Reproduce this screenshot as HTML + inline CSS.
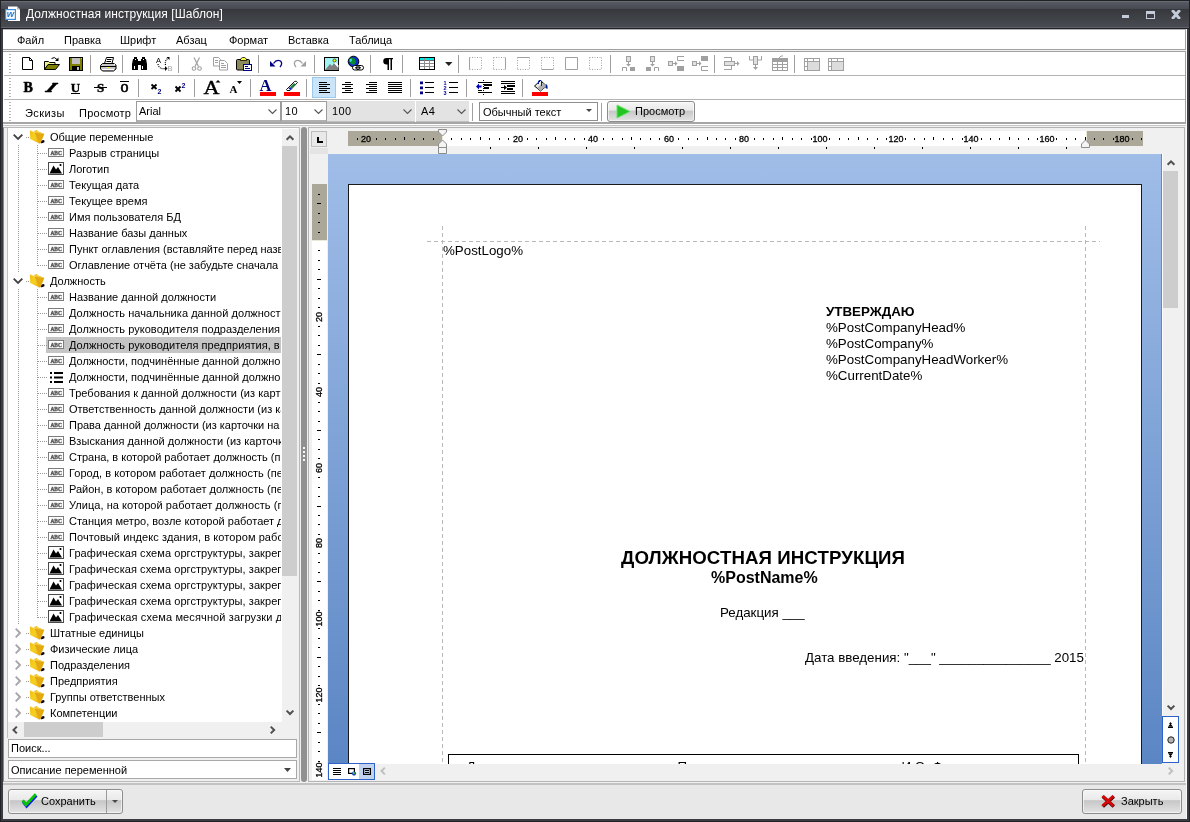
<!DOCTYPE html><html lang="ru"><head><meta charset="utf-8"><title>Должностная инструкция [Шаблон]</title><style>
*{box-sizing:border-box;margin:0;padding:0}
html,body{width:1190px;height:822px;overflow:hidden}
body{position:relative;background:#2b2c2f;font:11px "Liberation Sans",sans-serif;color:#000}
.a{position:absolute}
.t{position:absolute;white-space:pre;line-height:1}
.sep{position:absolute;width:1px;background:#a0a0a0}
.ic{position:absolute;width:16px;height:16px;overflow:visible}
svg{position:absolute;overflow:visible}
.doc{font-family:"Liberation Sans",sans-serif;color:#000}
</style></head><body><div id="w" style="position:absolute;left:0;top:0;width:1190px;height:822px;will-change:transform;overflow:hidden">
<div class="a" style="left:0;top:0;width:1190px;height:29px;background:linear-gradient(#1f2125 0,#1f2125 1px,#676b74 1px,#676b74 2px,#565a63 2px,#464951 9px,#35373b 9px,#37393d 10px,#484b52 27px,#5d616b 27px,#5d616b 28px,#1e2024 28px,#1e2024 29px)"></div>
<div class="a" style="left:0;top:0;width:1px;height:29px;background:#202226"></div><div class="a" style="left:1189px;top:0;width:1px;height:29px;background:#202226"></div>
<div class="a" style="left:0;top:29px;width:1190px;height:793px;background:#3a3c41;border:1px solid #202226;border-top:none"></div>
<div class="a" style="left:3px;top:29px;width:1184px;height:790px;background:#f0f0f0"></div>
<svg class="a" style="left:0;top:0" width="30" height="28" viewBox="0 0 30 28"><path d="M8 6.500h9l3 3v11.500h-12z" fill="#fff"/><path d="M17 6.500v3h3z" fill="#b9b9b9"/><rect x="5.600" y="9.600" width="9.800" height="9.800" fill="#fff" stroke="#3d8fdd" stroke-width="1.200"/><text x="10.500" y="17.300" font-family="Liberation Sans,sans-serif" font-size="9.500" font-weight="700" font-style="italic" fill="#2a7bd0" text-anchor="middle">w</text></svg>
<div class="t" style="left:26px;top:8px;font-size:12px;color:#fff;letter-spacing:0.07px">Должностная инструкция [Шаблон]</div>
<div class="a" style="left:1122px;top:15px;width:7px;height:3px;background:#c3ccd8"></div>
<div class="a" style="left:1146px;top:11px;width:9px;height:8px;border:1px solid #c3ccd8;border-top-width:3px"></div>
<svg class="a" style="left:1171px;top:10px;overflow:hidden" width="10" height="9" viewBox="0 0 10 9"><path d="M1.200 0L8.800 9M8.800 0L1.200 9" stroke="#c3ccd8" stroke-width="2.900" fill="none"/></svg>
<div class="a" style="left:3px;top:29px;width:1183px;height:21px;background:#fff;border-right:1px solid #a0a0a0;border-bottom:1px solid #a0a0a0;border-top:1px solid #b4b4b4"></div>
<div class="t" style="left:17px;top:35px">Файл</div>
<div class="t" style="left:64px;top:35px">Правка</div>
<div class="t" style="left:120px;top:35px">Шрифт</div>
<div class="t" style="left:176px;top:35px">Абзац</div>
<div class="t" style="left:229px;top:35px">Формат</div>
<div class="t" style="left:288px;top:35px">Вставка</div>
<div class="t" style="left:349px;top:35px">Таблица</div>
<div class="a" style="left:3px;top:51px;width:1183px;height:73px;background:#fff;border:1px solid #a0a0a0;border-left:none;border-bottom:2px solid #a6a6a6"></div>
<div class="a" style="left:4px;top:75px;width:1181px;height:1px;background:#b4b4b4"></div>
<div class="a" style="left:4px;top:99px;width:1181px;height:1px;background:#b4b4b4"></div>
<div class="a" style="left:4px;top:124px;width:1182px;height:1px;background:#fff"></div>
<div class="a" style="left:3px;top:125px;width:1184px;height:1px;background:#c6c6c6"></div>
<div class="a" style="left:9px;top:54px;width:2px;height:20px;background:repeating-linear-gradient(#b8b8b8 0,#b8b8b8 1px,#fff 1px,#fff 3px)"></div>
<div class="a" style="left:9px;top:78px;width:2px;height:20px;background:repeating-linear-gradient(#b8b8b8 0,#b8b8b8 1px,#fff 1px,#fff 3px)"></div>
<div class="a" style="left:9px;top:102px;width:2px;height:20px;background:repeating-linear-gradient(#b8b8b8 0,#b8b8b8 1px,#fff 1px,#fff 3px)"></div>
<div class="sep" style="left:90px;top:55px;height:18px"></div>
<div class="sep" style="left:122px;top:55px;height:18px"></div>
<div class="sep" style="left:178px;top:55px;height:18px"></div>
<div class="sep" style="left:258px;top:55px;height:18px"></div>
<div class="sep" style="left:314px;top:55px;height:18px"></div>
<div class="sep" style="left:370px;top:55px;height:18px"></div>
<div class="sep" style="left:402px;top:55px;height:18px"></div>
<div class="sep" style="left:458px;top:55px;height:18px"></div>
<div class="sep" style="left:610px;top:55px;height:18px"></div>
<div class="sep" style="left:714px;top:55px;height:18px"></div>
<div class="sep" style="left:794px;top:55px;height:18px"></div>
<div class="sep" style="left:138px;top:79px;height:18px"></div>
<div class="sep" style="left:194px;top:79px;height:18px"></div>
<div class="sep" style="left:250px;top:79px;height:18px"></div>
<div class="sep" style="left:306px;top:79px;height:18px"></div>
<div class="sep" style="left:410px;top:79px;height:18px"></div>
<div class="sep" style="left:466px;top:79px;height:18px"></div>
<div class="sep" style="left:522px;top:79px;height:18px"></div>
<svg style="left:0;top:0" width="1190" height="130" viewBox="0 0 1190 130"><path d="M22.5 57.5h7l3 3v9h-10z" fill="#fff" stroke="#000"/><path d="M29.5 57.5v3h3" fill="none" stroke="#000"/><path d="M44.5 69.5v-8h4l1 1h5.5v2.5h-7z" fill="#f2f28c" stroke="#000"/><path d="M44.5 69.5l3.5-5h11.5l-4 5z" fill="#808000" stroke="#000" stroke-linejoin="round"/><path d="M51.5 58.5q3-2.3 5.5 1" fill="none" stroke="#000"/><path d="M58.5 57.5v3.5h-3.5z" fill="#000"/><rect x="69.5" y="57.5" width="13" height="13" fill="#808000" stroke="#000"/><rect x="72" y="58" width="8" height="6" fill="#c0c0c0"/><rect x="72" y="66" width="8" height="5" fill="#000"/><rect x="77" y="67" width="2" height="3" fill="#c0c0c0"/><rect x="81" y="58" width="1" height="1" fill="#c0c0c0"/><path d="M104.5 63.5l2-6h7l-1.5 6z" fill="#fff" stroke="#000"/><path d="M107 59.5h4.5M106.5 61.500h4.500" stroke="#000" fill="none"/><path d="M102.500 63.500h11.500l2 1.500v4l-2.500 2h-11l-2-2v-3.500z" fill="#c8c8c8" stroke="#000"/><path d="M100.500 66.500h15.500" stroke="#000"/><rect x="107" y="67" width="3" height="1" fill="#ffff00"/><path d="M102 69.500h12" stroke="#fff"/><circle cx="114.500" cy="64.500" r="0.700" fill="#fff"/><path d="M134 57h3v2h1v2h3v-2h1v-2h3v2h1l1 5v6h-6v-5h-3v5h-6v-6l1-5h1z" fill="#000"/><path d="M134 66h1v3h-1zM142 66h1v3h-1zM135 59h1v1h-1zM143 59h1v1h-1z" fill="#fff"/><text x="156" y="62.500" font-family="Liberation Sans,sans-serif" font-size="7.500" fill="#000">A</text><path d="M158 64q1 5.500 7 4.500" fill="none" stroke="#000" stroke-width="1.200" stroke-dasharray="1 1"/><path d="M165 66v5l2.500-2.500z" fill="#000"/><path d="M165.500 65q-1-5 3-7" fill="none" stroke="#000" stroke-width="1.200" stroke-dasharray="1 1"/><path d="M166.500 57h3v3z" fill="#000"/><text x="167.500" y="70.500" font-family="Liberation Sans,sans-serif" font-size="7.500" fill="#a0a0a0">B</text><path d="M194 57.500l4.500 9M199.500 57.500l-4.500 9" stroke="#a0a0a0" stroke-width="1.200" fill="none"/><circle cx="194" cy="68.500" r="1.800" fill="none" stroke="#a0a0a0" stroke-width="1.100"/><circle cx="199.500" cy="68.500" r="1.800" fill="none" stroke="#a0a0a0" stroke-width="1.100"/><path d="M213.500 57.500h5l2 2v6.500h-7z" fill="#fff" stroke="#a0a0a0"/><path d="M219.500 60.500h5l3 3v6.500h-8z" fill="#fff" stroke="#a0a0a0"/><path d="M215 60.500h3M215 62.500h3M221 63.500h3M221 65.500h5M221 67.500h5" stroke="#a0a0a0"/><rect x="236.500" y="59.500" width="13" height="10.500" rx="1" fill="#8c8a5a" stroke="#000"/><path d="M240.500 60.500v-1.500l2-1.500h2l2 1.500v1.500z" fill="#ffff40" stroke="#000" stroke-width=".8"/><rect x="243.500" y="64.500" width="8" height="6" fill="#fff" stroke="#000080"/><path d="M245 66.500h3M245 68.500h5" stroke="#000080"/><path d="M270 61v5.500h5.500z" fill="#000080"/><path d="M273.500 63.500q3-4.500 7-2.500q2.500 2.500-.5 6" fill="none" stroke="#000080" stroke-width="1.300"/><path d="M306 61v5.500h-5.500z" fill="#a0a0a0"/><path d="M302.500 63.500q-3-4.500-7-2.500q-2.500 2.500 .5 6" fill="none" stroke="#a0a0a0" stroke-width="1.300"/><rect x="324.500" y="57.500" width="14" height="13" fill="#9ff3f3" stroke="#000"/><path d="M325 70l5-6 2 2 2-3 4.500 5v2z" fill="#808080"/><path d="M334 63l4.500 5v-2.500l-3-3.500z" fill="#fff"/><circle cx="334.500" cy="60.500" r="1.500" fill="#ffff00" stroke="#000" stroke-width=".6"/><circle cx="353.500" cy="61.500" r="5.300" fill="#0a2bd8" stroke="#000"/><path d="M350 58q3-1 5 1l1 3-2 3-3-1-2-3z" fill="#0a8a2a"/><path d="M349.500 59.500l2-1 .5 2.500-2 1z" fill="#40e0f0"/><rect x="352.500" y="65.500" width="7" height="4.500" rx="2.200" fill="#fff" stroke="#000"/><rect x="356.500" y="65.500" width="7" height="4.500" rx="2.200" fill="none" stroke="#000"/><path d="M355 67.800h6" stroke="#000"/><path d="M386.500 58h6.500v1.200h-1v10.800h-1.500v-10.800h-1.500v10.800h-1.500v-5.500h-1a3.250 3.250 0 0 1 0-6.500z" fill="#000"/><rect x="419.500" y="57.500" width="15" height="12" fill="#fff" stroke="#000"/><rect x="420" y="58" width="14" height="2" fill="#00e5e5"/><path d="M420 60.500h14" stroke="#000" stroke-width=".6"/><path d="M424.500 58v11M429.500 58v11M420 63.500h14M420 66.500h14" stroke="#8c8c8c"/><path d="M445 62h7.500l-3.750 4z" fill="#222"/><path d="M469.5 57.5v12" stroke="#a0a0a0" fill="none"/><path d="M481.5 57.5v12" stroke="#a0a0a0" fill="none" stroke-dasharray="1 1.500"/><path d="M469.5 57.5h12" stroke="#a0a0a0" fill="none" stroke-dasharray="1 1.500"/><path d="M469.5 69.5h12" stroke="#a0a0a0" fill="none" stroke-dasharray="1 1.500"/><path d="M493.5 57.5v12" stroke="#a0a0a0" fill="none" stroke-dasharray="1 1.500"/><path d="M505.5 57.5v12" stroke="#a0a0a0" fill="none"/><path d="M493.5 57.5h12" stroke="#a0a0a0" fill="none" stroke-dasharray="1 1.500"/><path d="M493.5 69.5h12" stroke="#a0a0a0" fill="none" stroke-dasharray="1 1.500"/><path d="M517.5 57.5v12" stroke="#a0a0a0" fill="none" stroke-dasharray="1 1.500"/><path d="M529.5 57.5v12" stroke="#a0a0a0" fill="none" stroke-dasharray="1 1.500"/><path d="M517.5 57.5h12" stroke="#a0a0a0" fill="none"/><path d="M517.5 69.5h12" stroke="#a0a0a0" fill="none" stroke-dasharray="1 1.500"/><path d="M541.5 57.5v12" stroke="#a0a0a0" fill="none" stroke-dasharray="1 1.500"/><path d="M553.5 57.5v12" stroke="#a0a0a0" fill="none" stroke-dasharray="1 1.500"/><path d="M541.5 57.5h12" stroke="#a0a0a0" fill="none" stroke-dasharray="1 1.500"/><path d="M541.5 69.5h12" stroke="#a0a0a0" fill="none"/><path d="M565.5 57.5v12" stroke="#a0a0a0" fill="none"/><path d="M577.5 57.5v12" stroke="#a0a0a0" fill="none"/><path d="M565.5 57.5h12" stroke="#a0a0a0" fill="none"/><path d="M565.5 69.5h12" stroke="#a0a0a0" fill="none"/><path d="M589.5 57.5v12" stroke="#a0a0a0" fill="none" stroke-dasharray="1 1.500"/><path d="M601.5 57.5v12" stroke="#a0a0a0" fill="none" stroke-dasharray="1 1.500"/><path d="M589.5 57.5h12" stroke="#a0a0a0" fill="none" stroke-dasharray="1 1.500"/><path d="M589.5 69.5h12" stroke="#a0a0a0" fill="none" stroke-dasharray="1 1.500"/><rect x="626.5" y="56.500" width="4" height="5" fill="#e0e0e0" stroke="#a0a0a0"/><path d="M628.5 61v4" stroke="#a0a0a0"/><path d="M626 64h5l-2.500 2.500z" fill="#a0a0a0"/><path d="M622.5 71v-3.500h4v3.500" fill="none" stroke="#a0a0a0"/><rect x="630" y="67" width="5" height="4" fill="#a0a0a0"/><rect x="650.5" y="56.500" width="4" height="5" fill="#e0e0e0" stroke="#a0a0a0"/><path d="M652.5 61v4" stroke="#a0a0a0"/><path d="M650 64h5l-2.500 2.500z" fill="#a0a0a0"/><rect x="646" y="67" width="5" height="4" fill="#a0a0a0"/><path d="M654.5 71v-3.500h4v3.500" fill="none" stroke="#a0a0a0"/><rect x="668.5" y="61.500" width="4" height="4" fill="#e0e0e0" stroke="#a0a0a0"/><path d="M672 63.500h4" stroke="#a0a0a0"/><path d="M675 61v5l2.500-2.500z" fill="#a0a0a0"/><path d="M684 56.500h-6.500v4h6.500" fill="none" stroke="#a0a0a0"/><rect x="677" y="66" width="7" height="5" fill="#a0a0a0"/><rect x="692.5" y="61.500" width="4" height="4" fill="#e0e0e0" stroke="#a0a0a0"/><path d="M696 63.500h4" stroke="#a0a0a0"/><path d="M699 61v5l2.500-2.500z" fill="#a0a0a0"/><rect x="701" y="56" width="7" height="5" fill="#a0a0a0"/><path d="M708 66.500h-6.500v4h6.500" fill="none" stroke="#a0a0a0"/><path d="M724 57.500h7.500v12h-7.500" fill="none" stroke="#a0a0a0"/><rect x="724.500" y="61.500" width="10" height="4" fill="#e0e0e0" stroke="#a0a0a0"/><path d="M734 63.500h4" stroke="#a0a0a0"/><path d="M737 61v5l2.500-2.500z" fill="#a0a0a0"/><path d="M749.500 56v4h12v-4" fill="none" stroke="#a0a0a0"/><rect x="753.500" y="56.500" width="4" height="8" fill="#e0e0e0" stroke="#a0a0a0"/><path d="M755.500 64v4" stroke="#a0a0a0"/><path d="M753 67h5l-2.500 3z" fill="#a0a0a0"/><rect x="772" y="58" width="16" height="13" fill="#a0a0a0"/><path d="M773 62h4v2h-4zM778 62h4v2h-4zM783 62h4v2h-4zM773 65h4v2h-4zM778 65h4v2h-4zM783 65h4v2h-4zM773 68h4v2h-4zM778 68h4v2h-4zM783 68h4v2h-4z" fill="#fff"/><path d="M779 58l2-2h2" stroke="#a0a0a0" fill="none"/><rect x="804" y="58" width="16" height="13" fill="#a0a0a0"/><path d="M805 59h2v2h-2zM808 59h5v2h-5zM814 59h5v2h-5zM805 62h2v4h-2zM805 67h2v3h-2z" fill="#fff"/><rect x="808" y="62" width="11" height="8" fill="#dcdcdc"/><rect x="828" y="58" width="16" height="13" fill="#a0a0a0"/><path d="M829 59h2v2h-2zM832 59h5v2h-5zM838 59h5v2h-5zM829 62h2v4h-2zM829 67h2v3h-2z" fill="#fff"/><rect x="832" y="62" width="11" height="8" fill="#dcdcdc"/></svg>
<svg style="left:0;top:0" width="1190" height="130" viewBox="0 0 1190 130"><text x="23.500" y="92" font-family="Liberation Serif,serif" font-weight="700" font-size="14" fill="#000" stroke="#000" stroke-width=".5">B</text><path d="M52.500 83h5.500v1h-1.200l-6.300 7h1v1h-6.500v-1h1.700l6.300-7h-.5z" fill="#000" stroke="#000" stroke-width=".5"/><text x="75.500" y="92" font-family="Liberation Serif,serif" font-weight="700" font-size="13" text-anchor="middle" fill="#000" stroke="#000" stroke-width=".4">U</text><path d="M71 93.500h9" stroke="#000"/><text x="100.500" y="92" font-family="Liberation Serif,serif" font-weight="700" font-size="13" text-anchor="middle" fill="#000" stroke="#000" stroke-width=".4">S</text><path d="M94 87.500h13" stroke="#000"/><text x="124.500" y="92" font-family="Liberation Serif,serif" font-weight="700" font-size="12.500" text-anchor="middle" fill="#000" stroke="#000" stroke-width=".5" textLength="8" lengthAdjust="spacingAndGlyphs">O</text><path d="M120 81.500h9" stroke="#000"/><path d="M151.500 84.500l5 4.500M156.500 84.500l-5 4.500" stroke="#000" stroke-width="1.900" fill="none"/><text x="157.500" y="93.500" font-family="Liberation Sans,sans-serif" font-weight="700" font-size="7" fill="#000080">2</text><path d="M175.500 86.500l5 5M180.500 86.500l-5 5" stroke="#000" stroke-width="1.900" fill="none"/><text x="181.500" y="87.500" font-family="Liberation Sans,sans-serif" font-weight="700" font-size="7" fill="#000080">2</text><text x="203.500" y="94" font-family="Liberation Serif,serif" font-size="18.500" fill="#000" stroke="#000" stroke-width=".4" textLength="16" lengthAdjust="spacingAndGlyphs">A</text><path d="M215.500 82.500h5l-2.500-2.500z" fill="#000"/><text x="229.500" y="93" font-family="Liberation Serif,serif" font-weight="700" font-size="11" fill="#000">A</text><path d="M237 81h5l-2.500 3z" fill="#000"/><text x="259.500" y="91" font-family="Liberation Serif,serif" font-weight="700" font-size="16.500" fill="#000080">A</text><rect x="260" y="92" width="16" height="4" fill="#ff0000"/><path d="M286.500 89.500l8-8q2-1 3 1l-7.500 8h-3z" fill="#fff" stroke="#000" stroke-width=".9"/><path d="M290 87l4-4 1.500 1.500-4 4z" fill="#1a8a3a"/><path d="M288.500 88.500l1.500-1.500 1.500 1.500-1 1.500z" fill="#0020c0"/><rect x="284" y="92" width="16" height="4" fill="#ff0000"/><rect x="312.500" y="77.500" width="23" height="20" fill="#cce4f7" stroke="#99c9ef"/><path d="M319 82.5H327M319 84.5H330M319 86.5H327M319 88.5H330M319 90.5H327M319 92.5H330" stroke="#000" fill="none"/><path d="M345 82.5H351M342 84.5H353M345 86.5H351M342 88.5H353M345 90.5H351M342 92.5H353" stroke="#000" fill="none"/><path d="M369 82.5H377M366 84.5H377M369 86.5H377M366 88.5H377M369 90.5H377M366 92.5H377" stroke="#000" fill="none"/><path d="M388 82.5H402M388 84.5H402M388 86.5H402M388 88.5H402M388 90.5H402M388 92.5H402" stroke="#000" fill="none"/><path d="M420 81.500h3v2.800h-3zM420 86.500h3v2.800h-3zM420 91.500h3v2.800h-3z" fill="#000080"/><path d="M425 82.5H434M425 87.5H434M425 92.5H434" stroke="#000" fill="none"/><text x="443.500" y="85" font-family="Liberation Sans,sans-serif" font-weight="700" font-size="5.500" fill="#000090">1</text><text x="443.500" y="90" font-family="Liberation Sans,sans-serif" font-weight="700" font-size="5.500" fill="#000090">2</text><text x="443.500" y="95" font-family="Liberation Sans,sans-serif" font-weight="700" font-size="5.500" fill="#000090">3</text><path d="M449 82.5H458M449 87.5H458M449 92.5H458" stroke="#000" fill="none"/><path d="M478 82.5H492M478 92.5H492" stroke="#000" fill="none"/><path d="M484 84h8v2h-8zM484 87h5v2h-5z" fill="#000"/><path d="M483.500 80v15" stroke="#000" stroke-dasharray="1 1"/><path d="M476 86.500l3-3v2h2.500v2h-2.500v2z" fill="#0000c0"/><path d="M478 90.5H482M478 82.5H482" stroke="#000" fill="none"/><path d="M501 81.5H515M501 83.5H515M501 91.5H515M501 93.5H515" stroke="#000" fill="none"/><path d="M507 85h8v2h-8zM507 88h6v2h-6z" fill="#000"/><path d="M501 87h3v-2l3 2.500-3 2.500v-2h-3z" fill="#000"/><path d="M534.500 86l6-5.500 6 5.500-6 5z" fill="#e8e8e8" stroke="#000"/><path d="M537 88l6-5 3.500 3-6 5z" fill="#b0b0b0"/><path d="M538.500 84v-3q1.500-1.500 3 0v5" fill="none" stroke="#0020a0"/><path d="M546 84q2 1 1.500 5l-2-1z" fill="#0020a0"/><rect x="532" y="92" width="16" height="4" fill="#ff0000"/></svg>
<div class="t" style="left:25px;top:108px;letter-spacing:.4px">Эскизы</div>
<div class="t" style="left:79px;top:108px;letter-spacing:.25px">Просмотр</div>
<div class="a" style="left:136px;top:101px;width:145px;height:21px;background:#fff;border:1px solid #9c9c9c;border-bottom:2px solid #b0b0b0"></div>
<div class="t" style="left:139px;top:106px">Arial</div>
<svg class="a" style="left:268px;top:109px" width="9" height="6" viewBox="0 0 9 6"><path d="M0.5 0.5L4.5 4.5L8.5 0.5" stroke="#555" stroke-width="1.1" fill="none"/></svg>
<div class="a" style="left:281px;top:101px;width:46px;height:21px;background:#fff;border:1px solid #9c9c9c;border-bottom:2px solid #b0b0b0"></div>
<div class="t" style="left:285px;top:106px;letter-spacing:.4px">10</div>
<svg class="a" style="left:314px;top:109px" width="9" height="6" viewBox="0 0 9 6"><path d="M0.5 0.5L4.5 4.5L8.5 0.5" stroke="#555" stroke-width="1.1" fill="none"/></svg>
<div class="a" style="left:327px;top:101px;width:88px;height:21px;background:#e3e3e3;border-bottom:1px solid #c0c0c0"></div>
<div class="t" style="left:332px;top:106px;letter-spacing:.4px">100</div>
<svg class="a" style="left:403px;top:109px" width="9" height="6" viewBox="0 0 9 6"><path d="M0.5 0.5L4.5 4.5L8.5 0.5" stroke="#555" stroke-width="1.1" fill="none"/></svg>
<div class="a" style="left:416px;top:101px;width:53px;height:21px;background:#e3e3e3;border-bottom:1px solid #c0c0c0"></div>
<div class="t" style="left:421px;top:106px;letter-spacing:.4px">A4</div>
<svg class="a" style="left:457px;top:109px" width="9" height="6" viewBox="0 0 9 6"><path d="M0.5 0.5L4.5 4.5L8.5 0.5" stroke="#555" stroke-width="1.1" fill="none"/></svg>
<div class="sep" style="left:472px;top:103px;height:18px"></div>
<div class="a" style="left:479px;top:102px;width:119px;height:19px;background:#fff;border:1px solid #8e8e8e"></div>
<div class="t" style="left:483px;top:107px">Обычный текст</div>
<svg class="a" style="left:586px;top:109px" width="6" height="3" viewBox="0 0 6 3"><path d="M0 0h6L3 3z" fill="#444"/></svg>
<div class="sep" style="left:601px;top:103px;height:18px"></div>
<div class="a" style="left:607px;top:101px;width:88px;height:21px;border:1px solid #8c8c8c;border-radius:3px;background:linear-gradient(#f5f5f5,#e9e9e9 44%,#c6c6c6 46%,#e3e3e3);box-shadow:inset 0 0 0 1px rgba(255,255,255,.6)"></div>
<svg class="a" style="left:616px;top:104px" width="15" height="15" viewBox="0 0 15 15"><path d="M1 1L14 7.5L1 14z" fill="#22c322" stroke="#6be06b" stroke-width="1"/></svg>
<div class="t" style="left:635px;top:106px">Просмотр</div>
<div class="a" style="left:3px;top:127px;width:297px;height:655px;background:#f0f0f0;border:1px solid #b9b9b9;border-left:1px solid #85878b"></div>
<div class="a" style="left:7px;top:128px;width:291px;height:610px;background:#fff;border-left:1px solid #c0c0c0"></div>
<div class="a" style="left:8px;top:129px;width:273px;height:593px;overflow:hidden">
<div class="a" style="left:10px;top:16px;width:1px;height:128px;background:repeating-linear-gradient(#9a9a9a 0,#9a9a9a 1px,transparent 1px,transparent 2px)"></div>
<div class="a" style="left:10px;top:160px;width:1px;height:335px;background:repeating-linear-gradient(#9a9a9a 0,#9a9a9a 1px,transparent 1px,transparent 2px)"></div>
<div class="a" style="left:29px;top:16px;width:1px;height:121px;background:repeating-linear-gradient(#9a9a9a 0,#9a9a9a 1px,transparent 1px,transparent 2px)"></div>
<div class="a" style="left:29px;top:160px;width:1px;height:329px;background:repeating-linear-gradient(#9a9a9a 0,#9a9a9a 1px,transparent 1px,transparent 2px)"></div>
<svg style="left:5px;top:5px" width="10" height="6" viewBox="0 0 10 6"><path d="M0.7 0.7L5 5l4.3-4.3" stroke="#404040" stroke-width="1.8" fill="none"/></svg>
<div class="a" style="left:18px;top:8px;width:3px;height:1px;background:repeating-linear-gradient(90deg,#9a9a9a 0,#9a9a9a 1px,transparent 1px,transparent 2px)"></div>
<svg style="left:20px;top:0px" width="19" height="16" viewBox="0 0 19 16"><defs><linearGradient id="fg0" x1="0" y1="0" x2="1" y2="1"><stop offset="0" stop-color="#f1bd1c"/><stop offset=".5" stop-color="#f8d020"/><stop offset="1" stop-color="#e9b010"/></linearGradient></defs><ellipse cx="14.300" cy="12.700" rx="2.400" ry="1.400" transform="rotate(-20 14.300 12.700)" fill="#0a0a0a"/><path d="M6.200 2l2.500-.8 1.800 1.600 5.800 2.300-3.500 9-1.500.3z" fill="#e3aa10"/><path d="M6.200 2l2.500-.8 1.800 1.600 5.800 2.300-9.100-1.300z" fill="#f3c93a"/><path d="M1.900 1.300l5.300 2.500 4.100 10.600-9.100-4.500z" fill="url(#fg0)"/><path d="M7.200 3.800l4.100 10.600" stroke="#d9a010" stroke-width=".7" fill="none"/></svg>
<div class="t" style="left:42px;top:3px">Общие переменные</div>
<div class="a" style="left:30px;top:24px;width:10px;height:1px;background:repeating-linear-gradient(90deg,#9a9a9a 0,#9a9a9a 1px,transparent 1px,transparent 2px)"></div>
<svg style="left:40px;top:19px" width="16" height="9" viewBox="0 0 16 9"><rect x="0.5" y="0.5" width="15" height="8" fill="#fff" stroke="#7c7c7c"/><text x="8.200" y="6.800" font-family="Liberation Serif,serif" font-weight="700" font-size="6.900" fill="#585858" stroke="#585858" stroke-width=".42" text-anchor="middle" textLength="11.500" lengthAdjust="spacingAndGlyphs">ABC</text></svg>
<div class="t" style="left:61px;top:19px;letter-spacing:0px">Разрыв страницы</div>
<div class="a" style="left:30px;top:40px;width:10px;height:1px;background:repeating-linear-gradient(90deg,#9a9a9a 0,#9a9a9a 1px,transparent 1px,transparent 2px)"></div>
<svg style="left:40px;top:33px" width="16" height="13" viewBox="0 0 16 13"><rect x="0.5" y="0.5" width="15" height="12" fill="#fff" stroke="#4a4a4a"/><path d="M1.500 11.500L5.500 3.500 8 7.500l2-2.500 4 6.500z" fill="#000"/><rect x="11.500" y="2" width="2" height="2" rx=".7" fill="#000"/></svg>
<div class="t" style="left:61px;top:35px;letter-spacing:0px">Логотип</div>
<div class="a" style="left:30px;top:56px;width:10px;height:1px;background:repeating-linear-gradient(90deg,#9a9a9a 0,#9a9a9a 1px,transparent 1px,transparent 2px)"></div>
<svg style="left:40px;top:51px" width="16" height="9" viewBox="0 0 16 9"><rect x="0.5" y="0.5" width="15" height="8" fill="#fff" stroke="#7c7c7c"/><text x="8.200" y="6.800" font-family="Liberation Serif,serif" font-weight="700" font-size="6.900" fill="#585858" stroke="#585858" stroke-width=".42" text-anchor="middle" textLength="11.500" lengthAdjust="spacingAndGlyphs">ABC</text></svg>
<div class="t" style="left:61px;top:51px;letter-spacing:0px">Текущая дата</div>
<div class="a" style="left:30px;top:72px;width:10px;height:1px;background:repeating-linear-gradient(90deg,#9a9a9a 0,#9a9a9a 1px,transparent 1px,transparent 2px)"></div>
<svg style="left:40px;top:67px" width="16" height="9" viewBox="0 0 16 9"><rect x="0.5" y="0.5" width="15" height="8" fill="#fff" stroke="#7c7c7c"/><text x="8.200" y="6.800" font-family="Liberation Serif,serif" font-weight="700" font-size="6.900" fill="#585858" stroke="#585858" stroke-width=".42" text-anchor="middle" textLength="11.500" lengthAdjust="spacingAndGlyphs">ABC</text></svg>
<div class="t" style="left:61px;top:67px;letter-spacing:0px">Текущее время</div>
<div class="a" style="left:30px;top:88px;width:10px;height:1px;background:repeating-linear-gradient(90deg,#9a9a9a 0,#9a9a9a 1px,transparent 1px,transparent 2px)"></div>
<svg style="left:40px;top:83px" width="16" height="9" viewBox="0 0 16 9"><rect x="0.5" y="0.5" width="15" height="8" fill="#fff" stroke="#7c7c7c"/><text x="8.200" y="6.800" font-family="Liberation Serif,serif" font-weight="700" font-size="6.900" fill="#585858" stroke="#585858" stroke-width=".42" text-anchor="middle" textLength="11.500" lengthAdjust="spacingAndGlyphs">ABC</text></svg>
<div class="t" style="left:61px;top:83px;letter-spacing:0px">Имя пользователя БД</div>
<div class="a" style="left:30px;top:104px;width:10px;height:1px;background:repeating-linear-gradient(90deg,#9a9a9a 0,#9a9a9a 1px,transparent 1px,transparent 2px)"></div>
<svg style="left:40px;top:99px" width="16" height="9" viewBox="0 0 16 9"><rect x="0.5" y="0.5" width="15" height="8" fill="#fff" stroke="#7c7c7c"/><text x="8.200" y="6.800" font-family="Liberation Serif,serif" font-weight="700" font-size="6.900" fill="#585858" stroke="#585858" stroke-width=".42" text-anchor="middle" textLength="11.500" lengthAdjust="spacingAndGlyphs">ABC</text></svg>
<div class="t" style="left:61px;top:99px;letter-spacing:0px">Название базы данных</div>
<div class="a" style="left:30px;top:120px;width:10px;height:1px;background:repeating-linear-gradient(90deg,#9a9a9a 0,#9a9a9a 1px,transparent 1px,transparent 2px)"></div>
<svg style="left:40px;top:115px" width="16" height="9" viewBox="0 0 16 9"><rect x="0.5" y="0.5" width="15" height="8" fill="#fff" stroke="#7c7c7c"/><text x="8.200" y="6.800" font-family="Liberation Serif,serif" font-weight="700" font-size="6.900" fill="#585858" stroke="#585858" stroke-width=".42" text-anchor="middle" textLength="11.500" lengthAdjust="spacingAndGlyphs">ABC</text></svg>
<div class="t" style="left:61px;top:115px;letter-spacing:-0.013px">Пункт оглавления (вставляйте перед названием раздела)</div>
<div class="a" style="left:30px;top:136px;width:10px;height:1px;background:repeating-linear-gradient(90deg,#9a9a9a 0,#9a9a9a 1px,transparent 1px,transparent 2px)"></div>
<svg style="left:40px;top:131px" width="16" height="9" viewBox="0 0 16 9"><rect x="0.5" y="0.5" width="15" height="8" fill="#fff" stroke="#7c7c7c"/><text x="8.200" y="6.800" font-family="Liberation Serif,serif" font-weight="700" font-size="6.900" fill="#585858" stroke="#585858" stroke-width=".42" text-anchor="middle" textLength="11.500" lengthAdjust="spacingAndGlyphs">ABC</text></svg>
<div class="t" style="left:61px;top:131px;letter-spacing:-0.013px">Оглавление отчёта (не забудьте сначала вставить пункты)</div>
<svg style="left:5px;top:149px" width="10" height="6" viewBox="0 0 10 6"><path d="M0.7 0.7L5 5l4.3-4.3" stroke="#404040" stroke-width="1.8" fill="none"/></svg>
<div class="a" style="left:18px;top:152px;width:3px;height:1px;background:repeating-linear-gradient(90deg,#9a9a9a 0,#9a9a9a 1px,transparent 1px,transparent 2px)"></div>
<svg style="left:20px;top:144px" width="19" height="16" viewBox="0 0 19 16"><defs><linearGradient id="fg9" x1="0" y1="0" x2="1" y2="1"><stop offset="0" stop-color="#f1bd1c"/><stop offset=".5" stop-color="#f8d020"/><stop offset="1" stop-color="#e9b010"/></linearGradient></defs><ellipse cx="14.300" cy="12.700" rx="2.400" ry="1.400" transform="rotate(-20 14.300 12.700)" fill="#0a0a0a"/><path d="M6.200 2l2.500-.8 1.800 1.600 5.800 2.300-3.500 9-1.500.3z" fill="#e3aa10"/><path d="M6.200 2l2.500-.8 1.800 1.600 5.800 2.300-9.100-1.300z" fill="#f3c93a"/><path d="M1.900 1.300l5.300 2.500 4.100 10.600-9.100-4.500z" fill="url(#fg9)"/><path d="M7.200 3.800l4.100 10.600" stroke="#d9a010" stroke-width=".7" fill="none"/></svg>
<div class="t" style="left:42px;top:147px">Должность</div>
<div class="a" style="left:30px;top:168px;width:10px;height:1px;background:repeating-linear-gradient(90deg,#9a9a9a 0,#9a9a9a 1px,transparent 1px,transparent 2px)"></div>
<svg style="left:40px;top:163px" width="16" height="9" viewBox="0 0 16 9"><rect x="0.5" y="0.5" width="15" height="8" fill="#fff" stroke="#7c7c7c"/><text x="8.200" y="6.800" font-family="Liberation Serif,serif" font-weight="700" font-size="6.900" fill="#585858" stroke="#585858" stroke-width=".42" text-anchor="middle" textLength="11.500" lengthAdjust="spacingAndGlyphs">ABC</text></svg>
<div class="t" style="left:61px;top:163px;letter-spacing:0px">Название данной должности</div>
<div class="a" style="left:30px;top:184px;width:10px;height:1px;background:repeating-linear-gradient(90deg,#9a9a9a 0,#9a9a9a 1px,transparent 1px,transparent 2px)"></div>
<svg style="left:40px;top:179px" width="16" height="9" viewBox="0 0 16 9"><rect x="0.5" y="0.5" width="15" height="8" fill="#fff" stroke="#7c7c7c"/><text x="8.200" y="6.800" font-family="Liberation Serif,serif" font-weight="700" font-size="6.900" fill="#585858" stroke="#585858" stroke-width=".42" text-anchor="middle" textLength="11.500" lengthAdjust="spacingAndGlyphs">ABC</text></svg>
<div class="t" style="left:61px;top:179px;letter-spacing:0.048px">Должность начальника данной должности</div>
<div class="a" style="left:30px;top:200px;width:10px;height:1px;background:repeating-linear-gradient(90deg,#9a9a9a 0,#9a9a9a 1px,transparent 1px,transparent 2px)"></div>
<svg style="left:40px;top:195px" width="16" height="9" viewBox="0 0 16 9"><rect x="0.5" y="0.5" width="15" height="8" fill="#fff" stroke="#7c7c7c"/><text x="8.200" y="6.800" font-family="Liberation Serif,serif" font-weight="700" font-size="6.900" fill="#585858" stroke="#585858" stroke-width=".42" text-anchor="middle" textLength="11.500" lengthAdjust="spacingAndGlyphs">ABC</text></svg>
<div class="t" style="left:61px;top:195px;letter-spacing:0.041px">Должность руководителя подразделения, в котором</div>
<div class="a" style="left:38px;top:208px;width:240px;height:16px;background:#c5c5c5"></div>
<div class="a" style="left:30px;top:216px;width:10px;height:1px;background:repeating-linear-gradient(90deg,#9a9a9a 0,#9a9a9a 1px,transparent 1px,transparent 2px)"></div>
<svg style="left:40px;top:211px" width="16" height="9" viewBox="0 0 16 9"><rect x="0.5" y="0.5" width="15" height="8" fill="#fff" stroke="#7c7c7c"/><text x="8.200" y="6.800" font-family="Liberation Serif,serif" font-weight="700" font-size="6.900" fill="#585858" stroke="#585858" stroke-width=".42" text-anchor="middle" textLength="11.500" lengthAdjust="spacingAndGlyphs">ABC</text></svg>
<div class="t" style="left:61px;top:211px;letter-spacing:0.042px">Должность руководителя предприятия, в котором</div>
<div class="a" style="left:30px;top:232px;width:10px;height:1px;background:repeating-linear-gradient(90deg,#9a9a9a 0,#9a9a9a 1px,transparent 1px,transparent 2px)"></div>
<svg style="left:40px;top:227px" width="16" height="9" viewBox="0 0 16 9"><rect x="0.5" y="0.5" width="15" height="8" fill="#fff" stroke="#7c7c7c"/><text x="8.200" y="6.800" font-family="Liberation Serif,serif" font-weight="700" font-size="6.900" fill="#585858" stroke="#585858" stroke-width=".42" text-anchor="middle" textLength="11.500" lengthAdjust="spacingAndGlyphs">ABC</text></svg>
<div class="t" style="left:61px;top:227px;letter-spacing:-0.017px">Должности, подчинённые данной должности (строкой)</div>
<div class="a" style="left:30px;top:248px;width:10px;height:1px;background:repeating-linear-gradient(90deg,#9a9a9a 0,#9a9a9a 1px,transparent 1px,transparent 2px)"></div>
<svg style="left:42px;top:243px" width="13" height="11" viewBox="0 0 13 11"><path d="M0 0h2v2H0zM0 4.5h2v2H0zM0 9h2v2H0zM4 0h9v2H4zM4 4.5h9v2H4zM4 9h9v2H4z" fill="#000"/></svg>
<div class="t" style="left:61px;top:243px;letter-spacing:-0.017px">Должности, подчинённые данной должности (списком)</div>
<div class="a" style="left:30px;top:264px;width:10px;height:1px;background:repeating-linear-gradient(90deg,#9a9a9a 0,#9a9a9a 1px,transparent 1px,transparent 2px)"></div>
<svg style="left:40px;top:259px" width="16" height="9" viewBox="0 0 16 9"><rect x="0.5" y="0.5" width="15" height="8" fill="#fff" stroke="#7c7c7c"/><text x="8.200" y="6.800" font-family="Liberation Serif,serif" font-weight="700" font-size="6.900" fill="#585858" stroke="#585858" stroke-width=".42" text-anchor="middle" textLength="11.500" lengthAdjust="spacingAndGlyphs">ABC</text></svg>
<div class="t" style="left:61px;top:259px;letter-spacing:0.052px">Требования к данной должности (из карточки)</div>
<div class="a" style="left:30px;top:280px;width:10px;height:1px;background:repeating-linear-gradient(90deg,#9a9a9a 0,#9a9a9a 1px,transparent 1px,transparent 2px)"></div>
<svg style="left:40px;top:275px" width="16" height="9" viewBox="0 0 16 9"><rect x="0.5" y="0.5" width="15" height="8" fill="#fff" stroke="#7c7c7c"/><text x="8.200" y="6.800" font-family="Liberation Serif,serif" font-weight="700" font-size="6.900" fill="#585858" stroke="#585858" stroke-width=".42" text-anchor="middle" textLength="11.500" lengthAdjust="spacingAndGlyphs">ABC</text></svg>
<div class="t" style="left:61px;top:275px;letter-spacing:0.012px">Ответственность данной должности (из карточки)</div>
<div class="a" style="left:30px;top:296px;width:10px;height:1px;background:repeating-linear-gradient(90deg,#9a9a9a 0,#9a9a9a 1px,transparent 1px,transparent 2px)"></div>
<svg style="left:40px;top:291px" width="16" height="9" viewBox="0 0 16 9"><rect x="0.5" y="0.5" width="15" height="8" fill="#fff" stroke="#7c7c7c"/><text x="8.200" y="6.800" font-family="Liberation Serif,serif" font-weight="700" font-size="6.900" fill="#585858" stroke="#585858" stroke-width=".42" text-anchor="middle" textLength="11.500" lengthAdjust="spacingAndGlyphs">ABC</text></svg>
<div class="t" style="left:61px;top:291px;letter-spacing:-0.007px">Права данной должности (из карточки на вкладке)</div>
<div class="a" style="left:30px;top:312px;width:10px;height:1px;background:repeating-linear-gradient(90deg,#9a9a9a 0,#9a9a9a 1px,transparent 1px,transparent 2px)"></div>
<svg style="left:40px;top:307px" width="16" height="9" viewBox="0 0 16 9"><rect x="0.5" y="0.5" width="15" height="8" fill="#fff" stroke="#7c7c7c"/><text x="8.200" y="6.800" font-family="Liberation Serif,serif" font-weight="700" font-size="6.900" fill="#585858" stroke="#585858" stroke-width=".42" text-anchor="middle" textLength="11.500" lengthAdjust="spacingAndGlyphs">ABC</text></svg>
<div class="t" style="left:61px;top:307px;letter-spacing:0.038px">Взыскания данной должности (из карточки на вкладке)</div>
<div class="a" style="left:30px;top:328px;width:10px;height:1px;background:repeating-linear-gradient(90deg,#9a9a9a 0,#9a9a9a 1px,transparent 1px,transparent 2px)"></div>
<svg style="left:40px;top:323px" width="16" height="9" viewBox="0 0 16 9"><rect x="0.5" y="0.5" width="15" height="8" fill="#fff" stroke="#7c7c7c"/><text x="8.200" y="6.800" font-family="Liberation Serif,serif" font-weight="700" font-size="6.900" fill="#585858" stroke="#585858" stroke-width=".42" text-anchor="middle" textLength="11.500" lengthAdjust="spacingAndGlyphs">ABC</text></svg>
<div class="t" style="left:61px;top:323px;letter-spacing:-0.021px">Страна, в которой работает должность (первая)</div>
<div class="a" style="left:30px;top:344px;width:10px;height:1px;background:repeating-linear-gradient(90deg,#9a9a9a 0,#9a9a9a 1px,transparent 1px,transparent 2px)"></div>
<svg style="left:40px;top:339px" width="16" height="9" viewBox="0 0 16 9"><rect x="0.5" y="0.5" width="15" height="8" fill="#fff" stroke="#7c7c7c"/><text x="8.200" y="6.800" font-family="Liberation Serif,serif" font-weight="700" font-size="6.900" fill="#585858" stroke="#585858" stroke-width=".42" text-anchor="middle" textLength="11.500" lengthAdjust="spacingAndGlyphs">ABC</text></svg>
<div class="t" style="left:61px;top:339px;letter-spacing:0.045px">Город, в котором работает должность (первый)</div>
<div class="a" style="left:30px;top:360px;width:10px;height:1px;background:repeating-linear-gradient(90deg,#9a9a9a 0,#9a9a9a 1px,transparent 1px,transparent 2px)"></div>
<svg style="left:40px;top:355px" width="16" height="9" viewBox="0 0 16 9"><rect x="0.5" y="0.5" width="15" height="8" fill="#fff" stroke="#7c7c7c"/><text x="8.200" y="6.800" font-family="Liberation Serif,serif" font-weight="700" font-size="6.900" fill="#585858" stroke="#585858" stroke-width=".42" text-anchor="middle" textLength="11.500" lengthAdjust="spacingAndGlyphs">ABC</text></svg>
<div class="t" style="left:61px;top:355px;letter-spacing:0.002px">Район, в котором работает должность (первый)</div>
<div class="a" style="left:30px;top:376px;width:10px;height:1px;background:repeating-linear-gradient(90deg,#9a9a9a 0,#9a9a9a 1px,transparent 1px,transparent 2px)"></div>
<svg style="left:40px;top:371px" width="16" height="9" viewBox="0 0 16 9"><rect x="0.5" y="0.5" width="15" height="8" fill="#fff" stroke="#7c7c7c"/><text x="8.200" y="6.800" font-family="Liberation Serif,serif" font-weight="700" font-size="6.900" fill="#585858" stroke="#585858" stroke-width=".42" text-anchor="middle" textLength="11.500" lengthAdjust="spacingAndGlyphs">ABC</text></svg>
<div class="t" style="left:61px;top:371px;letter-spacing:0.052px">Улица, на которой работает должность (первая)</div>
<div class="a" style="left:30px;top:392px;width:10px;height:1px;background:repeating-linear-gradient(90deg,#9a9a9a 0,#9a9a9a 1px,transparent 1px,transparent 2px)"></div>
<svg style="left:40px;top:387px" width="16" height="9" viewBox="0 0 16 9"><rect x="0.5" y="0.5" width="15" height="8" fill="#fff" stroke="#7c7c7c"/><text x="8.200" y="6.800" font-family="Liberation Serif,serif" font-weight="700" font-size="6.900" fill="#585858" stroke="#585858" stroke-width=".42" text-anchor="middle" textLength="11.500" lengthAdjust="spacingAndGlyphs">ABC</text></svg>
<div class="t" style="left:61px;top:387px;letter-spacing:0.003px">Станция метро, возле которой работает должность</div>
<div class="a" style="left:30px;top:408px;width:10px;height:1px;background:repeating-linear-gradient(90deg,#9a9a9a 0,#9a9a9a 1px,transparent 1px,transparent 2px)"></div>
<svg style="left:40px;top:403px" width="16" height="9" viewBox="0 0 16 9"><rect x="0.5" y="0.5" width="15" height="8" fill="#fff" stroke="#7c7c7c"/><text x="8.200" y="6.800" font-family="Liberation Serif,serif" font-weight="700" font-size="6.900" fill="#585858" stroke="#585858" stroke-width=".42" text-anchor="middle" textLength="11.500" lengthAdjust="spacingAndGlyphs">ABC</text></svg>
<div class="t" style="left:61px;top:403px;letter-spacing:0.079px">Почтовый индекс здания, в котором работает</div>
<div class="a" style="left:30px;top:424px;width:10px;height:1px;background:repeating-linear-gradient(90deg,#9a9a9a 0,#9a9a9a 1px,transparent 1px,transparent 2px)"></div>
<svg style="left:40px;top:417px" width="16" height="13" viewBox="0 0 16 13"><rect x="0.5" y="0.5" width="15" height="12" fill="#fff" stroke="#4a4a4a"/><path d="M1.500 11.500L5.500 3.500 8 7.500l2-2.500 4 6.500z" fill="#000"/><rect x="11.500" y="2" width="2" height="2" rx=".7" fill="#000"/></svg>
<div class="t" style="left:61px;top:419px;letter-spacing:0.067px">Графическая схема оргструктуры, закреплённой</div>
<div class="a" style="left:30px;top:440px;width:10px;height:1px;background:repeating-linear-gradient(90deg,#9a9a9a 0,#9a9a9a 1px,transparent 1px,transparent 2px)"></div>
<svg style="left:40px;top:433px" width="16" height="13" viewBox="0 0 16 13"><rect x="0.5" y="0.5" width="15" height="12" fill="#fff" stroke="#4a4a4a"/><path d="M1.500 11.500L5.500 3.500 8 7.500l2-2.500 4 6.500z" fill="#000"/><rect x="11.500" y="2" width="2" height="2" rx=".7" fill="#000"/></svg>
<div class="t" style="left:61px;top:435px;letter-spacing:0.067px">Графическая схема оргструктуры, закреплённой</div>
<div class="a" style="left:30px;top:456px;width:10px;height:1px;background:repeating-linear-gradient(90deg,#9a9a9a 0,#9a9a9a 1px,transparent 1px,transparent 2px)"></div>
<svg style="left:40px;top:449px" width="16" height="13" viewBox="0 0 16 13"><rect x="0.5" y="0.5" width="15" height="12" fill="#fff" stroke="#4a4a4a"/><path d="M1.500 11.500L5.500 3.500 8 7.500l2-2.500 4 6.500z" fill="#000"/><rect x="11.500" y="2" width="2" height="2" rx=".7" fill="#000"/></svg>
<div class="t" style="left:61px;top:451px;letter-spacing:0.067px">Графическая схема оргструктуры, закреплённой</div>
<div class="a" style="left:30px;top:472px;width:10px;height:1px;background:repeating-linear-gradient(90deg,#9a9a9a 0,#9a9a9a 1px,transparent 1px,transparent 2px)"></div>
<svg style="left:40px;top:465px" width="16" height="13" viewBox="0 0 16 13"><rect x="0.5" y="0.5" width="15" height="12" fill="#fff" stroke="#4a4a4a"/><path d="M1.500 11.500L5.500 3.500 8 7.500l2-2.500 4 6.500z" fill="#000"/><rect x="11.500" y="2" width="2" height="2" rx=".7" fill="#000"/></svg>
<div class="t" style="left:61px;top:467px;letter-spacing:0.067px">Графическая схема оргструктуры, закреплённой</div>
<div class="a" style="left:30px;top:488px;width:10px;height:1px;background:repeating-linear-gradient(90deg,#9a9a9a 0,#9a9a9a 1px,transparent 1px,transparent 2px)"></div>
<svg style="left:40px;top:481px" width="16" height="13" viewBox="0 0 16 13"><rect x="0.5" y="0.5" width="15" height="12" fill="#fff" stroke="#4a4a4a"/><path d="M1.500 11.500L5.500 3.500 8 7.500l2-2.500 4 6.500z" fill="#000"/><rect x="11.500" y="2" width="2" height="2" rx=".7" fill="#000"/></svg>
<div class="t" style="left:61px;top:483px;letter-spacing:0.131px">Графическая схема месячной загрузки должности</div>
<svg style="left:7px;top:499px" width="6" height="10" viewBox="0 0 6 10"><path d="M0.7 0.7L5 5 .7 9.3" stroke="#a6a6a6" stroke-width="1.9" fill="none"/></svg>
<div class="a" style="left:18px;top:504px;width:3px;height:1px;background:repeating-linear-gradient(90deg,#9a9a9a 0,#9a9a9a 1px,transparent 1px,transparent 2px)"></div>
<svg style="left:20px;top:496px" width="19" height="16" viewBox="0 0 19 16"><defs><linearGradient id="fg31" x1="0" y1="0" x2="1" y2="1"><stop offset="0" stop-color="#f1bd1c"/><stop offset=".5" stop-color="#f8d020"/><stop offset="1" stop-color="#e9b010"/></linearGradient></defs><ellipse cx="14.300" cy="12.700" rx="2.400" ry="1.400" transform="rotate(-20 14.300 12.700)" fill="#0a0a0a"/><path d="M6.200 2l2.500-.8 1.800 1.600 5.800 2.300-3.500 9-1.500.3z" fill="#e3aa10"/><path d="M6.200 2l2.500-.8 1.800 1.600 5.800 2.300-9.100-1.300z" fill="#f3c93a"/><path d="M1.900 1.300l5.300 2.500 4.100 10.600-9.100-4.500z" fill="url(#fg31)"/><path d="M7.200 3.800l4.100 10.600" stroke="#d9a010" stroke-width=".7" fill="none"/></svg>
<div class="t" style="left:42px;top:499px">Штатные единицы</div>
<svg style="left:7px;top:515px" width="6" height="10" viewBox="0 0 6 10"><path d="M0.7 0.7L5 5 .7 9.3" stroke="#a6a6a6" stroke-width="1.9" fill="none"/></svg>
<div class="a" style="left:18px;top:520px;width:3px;height:1px;background:repeating-linear-gradient(90deg,#9a9a9a 0,#9a9a9a 1px,transparent 1px,transparent 2px)"></div>
<svg style="left:20px;top:512px" width="19" height="16" viewBox="0 0 19 16"><defs><linearGradient id="fg32" x1="0" y1="0" x2="1" y2="1"><stop offset="0" stop-color="#f1bd1c"/><stop offset=".5" stop-color="#f8d020"/><stop offset="1" stop-color="#e9b010"/></linearGradient></defs><ellipse cx="14.300" cy="12.700" rx="2.400" ry="1.400" transform="rotate(-20 14.300 12.700)" fill="#0a0a0a"/><path d="M6.200 2l2.500-.8 1.800 1.600 5.800 2.300-3.500 9-1.500.3z" fill="#e3aa10"/><path d="M6.200 2l2.500-.8 1.800 1.600 5.800 2.300-9.100-1.300z" fill="#f3c93a"/><path d="M1.900 1.300l5.300 2.500 4.100 10.600-9.100-4.500z" fill="url(#fg32)"/><path d="M7.200 3.800l4.100 10.600" stroke="#d9a010" stroke-width=".7" fill="none"/></svg>
<div class="t" style="left:42px;top:515px">Физические лица</div>
<svg style="left:7px;top:531px" width="6" height="10" viewBox="0 0 6 10"><path d="M0.7 0.7L5 5 .7 9.3" stroke="#a6a6a6" stroke-width="1.9" fill="none"/></svg>
<div class="a" style="left:18px;top:536px;width:3px;height:1px;background:repeating-linear-gradient(90deg,#9a9a9a 0,#9a9a9a 1px,transparent 1px,transparent 2px)"></div>
<svg style="left:20px;top:528px" width="19" height="16" viewBox="0 0 19 16"><defs><linearGradient id="fg33" x1="0" y1="0" x2="1" y2="1"><stop offset="0" stop-color="#f1bd1c"/><stop offset=".5" stop-color="#f8d020"/><stop offset="1" stop-color="#e9b010"/></linearGradient></defs><ellipse cx="14.300" cy="12.700" rx="2.400" ry="1.400" transform="rotate(-20 14.300 12.700)" fill="#0a0a0a"/><path d="M6.200 2l2.500-.8 1.800 1.600 5.800 2.300-3.500 9-1.500.3z" fill="#e3aa10"/><path d="M6.200 2l2.500-.8 1.800 1.600 5.800 2.300-9.100-1.300z" fill="#f3c93a"/><path d="M1.900 1.300l5.300 2.500 4.100 10.600-9.100-4.500z" fill="url(#fg33)"/><path d="M7.200 3.800l4.100 10.600" stroke="#d9a010" stroke-width=".7" fill="none"/></svg>
<div class="t" style="left:42px;top:531px">Подразделения</div>
<svg style="left:7px;top:547px" width="6" height="10" viewBox="0 0 6 10"><path d="M0.7 0.7L5 5 .7 9.3" stroke="#a6a6a6" stroke-width="1.9" fill="none"/></svg>
<div class="a" style="left:18px;top:552px;width:3px;height:1px;background:repeating-linear-gradient(90deg,#9a9a9a 0,#9a9a9a 1px,transparent 1px,transparent 2px)"></div>
<svg style="left:20px;top:544px" width="19" height="16" viewBox="0 0 19 16"><defs><linearGradient id="fg34" x1="0" y1="0" x2="1" y2="1"><stop offset="0" stop-color="#f1bd1c"/><stop offset=".5" stop-color="#f8d020"/><stop offset="1" stop-color="#e9b010"/></linearGradient></defs><ellipse cx="14.300" cy="12.700" rx="2.400" ry="1.400" transform="rotate(-20 14.300 12.700)" fill="#0a0a0a"/><path d="M6.200 2l2.500-.8 1.800 1.600 5.800 2.300-3.500 9-1.500.3z" fill="#e3aa10"/><path d="M6.200 2l2.500-.8 1.800 1.600 5.800 2.300-9.100-1.300z" fill="#f3c93a"/><path d="M1.900 1.300l5.300 2.500 4.100 10.600-9.100-4.500z" fill="url(#fg34)"/><path d="M7.200 3.800l4.100 10.600" stroke="#d9a010" stroke-width=".7" fill="none"/></svg>
<div class="t" style="left:42px;top:547px">Предприятия</div>
<svg style="left:7px;top:563px" width="6" height="10" viewBox="0 0 6 10"><path d="M0.7 0.7L5 5 .7 9.3" stroke="#a6a6a6" stroke-width="1.9" fill="none"/></svg>
<div class="a" style="left:18px;top:568px;width:3px;height:1px;background:repeating-linear-gradient(90deg,#9a9a9a 0,#9a9a9a 1px,transparent 1px,transparent 2px)"></div>
<svg style="left:20px;top:560px" width="19" height="16" viewBox="0 0 19 16"><defs><linearGradient id="fg35" x1="0" y1="0" x2="1" y2="1"><stop offset="0" stop-color="#f1bd1c"/><stop offset=".5" stop-color="#f8d020"/><stop offset="1" stop-color="#e9b010"/></linearGradient></defs><ellipse cx="14.300" cy="12.700" rx="2.400" ry="1.400" transform="rotate(-20 14.300 12.700)" fill="#0a0a0a"/><path d="M6.200 2l2.500-.8 1.800 1.600 5.800 2.300-3.500 9-1.500.3z" fill="#e3aa10"/><path d="M6.200 2l2.500-.8 1.800 1.600 5.800 2.300-9.100-1.300z" fill="#f3c93a"/><path d="M1.900 1.300l5.300 2.500 4.100 10.600-9.100-4.500z" fill="url(#fg35)"/><path d="M7.200 3.800l4.100 10.600" stroke="#d9a010" stroke-width=".7" fill="none"/></svg>
<div class="t" style="left:42px;top:563px">Группы ответственных</div>
<svg style="left:7px;top:579px" width="6" height="10" viewBox="0 0 6 10"><path d="M0.7 0.7L5 5 .7 9.3" stroke="#a6a6a6" stroke-width="1.9" fill="none"/></svg>
<div class="a" style="left:18px;top:584px;width:3px;height:1px;background:repeating-linear-gradient(90deg,#9a9a9a 0,#9a9a9a 1px,transparent 1px,transparent 2px)"></div>
<svg style="left:20px;top:576px" width="19" height="16" viewBox="0 0 19 16"><defs><linearGradient id="fg36" x1="0" y1="0" x2="1" y2="1"><stop offset="0" stop-color="#f1bd1c"/><stop offset=".5" stop-color="#f8d020"/><stop offset="1" stop-color="#e9b010"/></linearGradient></defs><ellipse cx="14.300" cy="12.700" rx="2.400" ry="1.400" transform="rotate(-20 14.300 12.700)" fill="#0a0a0a"/><path d="M6.200 2l2.500-.8 1.800 1.600 5.800 2.300-3.500 9-1.500.3z" fill="#e3aa10"/><path d="M6.200 2l2.500-.8 1.800 1.600 5.800 2.300-9.100-1.300z" fill="#f3c93a"/><path d="M1.900 1.300l5.300 2.500 4.100 10.600-9.100-4.500z" fill="url(#fg36)"/><path d="M7.200 3.800l4.100 10.600" stroke="#d9a010" stroke-width=".7" fill="none"/></svg>
<div class="t" style="left:42px;top:579px">Компетенции</div>
</div>
<div class="a" style="left:282px;top:129px;width:16px;height:593px;background:#f0f0f0"></div>
<div class="a" style="left:282px;top:146px;width:15px;height:430px;background:#cdcdcd"></div>
<svg style="left:285.5px;top:135px" width="8" height="5.400" viewBox="0 0 9 6"><path d="M0.7 5.3L4.5 1.5 8.3 5.3" stroke="#505050" stroke-width="2.3" fill="none"/></svg>
<svg style="left:285.5px;top:710px" width="8" height="5.400" viewBox="0 0 9 6"><path d="M0.7 0.7L4.5 4.5 8.3 0.7" stroke="#505050" stroke-width="2.3" fill="none"/></svg>
<div class="a" style="left:8px;top:722px;width:290px;height:16px;background:#f0f0f0"></div>
<div class="a" style="left:24px;top:722px;width:79px;height:15px;background:#cdcdcd"></div>
<svg style="left:12px;top:726px" width="5.600" height="8" viewBox="0 0 6 9"><path d="M5.3 0.7L1.5 4.5 5.3 8.3" stroke="#505050" stroke-width="2.3" fill="none"/></svg>
<svg style="left:270px;top:726px" width="5.600" height="8" viewBox="0 0 6 9"><path d="M0.7 0.7L4.5 4.5 .7 8.3" stroke="#505050" stroke-width="2.3" fill="none"/></svg>
<div class="a" style="left:8px;top:739px;width:289px;height:19px;background:#fff;border:1px solid #a8a8a8"></div>
<div class="t" style="left:11px;top:743px">Поиск...</div>
<div class="a" style="left:8px;top:760px;width:289px;height:19px;background:#fff;border:1px solid #a8a8a8"></div>
<div class="t" style="left:11px;top:765px">Описание переменной</div>
<svg style="left:284px;top:768px" width="7" height="4" viewBox="0 0 7 4"><path d="M0 0h7L3.5 4z" fill="#444"/></svg>
<div class="a" style="left:301px;top:127px;width:6px;height:655px;background:#919191;border-radius:3px"></div>
<div class="a" style="left:303px;top:447px;width:2px;height:2px;background:#f6f6f6"></div>
<div class="a" style="left:303px;top:451px;width:2px;height:2px;background:#f6f6f6"></div>
<div class="a" style="left:303px;top:455px;width:2px;height:2px;background:#f6f6f6"></div>
<div class="a" style="left:303px;top:459px;width:2px;height:2px;background:#f6f6f6"></div>
<div class="a" style="left:308px;top:127px;width:877px;height:655px;background:#f0f0f0;border:1px solid #b4b4b4"></div>
<div class="a" style="left:311px;top:131px;width:16px;height:16px;background:#e9e9e9;border:1px solid #bdbdbd"></div>
<div class="a" style="left:317px;top:137px;width:6px;height:6px;border-left:2px solid #000;border-bottom:2px solid #000"></div>
<div class="a" style="left:310px;top:148px;width:18px;height:6px;background:#e4e4e4"></div>
<div class="a" style="left:348px;top:131px;width:795px;height:15px;background:#aca899"></div>
<div class="a" style="left:442px;top:131px;width:645px;height:15px;background:#fff;border-right:1px solid #ece9d8;border-left:1px solid #ece9d8"></div>
<svg style="left:340px;top:127px" width="820" height="27" viewBox="340 127 820 27"><rect x="357" y="138" width="1" height="2" fill="#000"/><text x="366" y="142" font-family="Liberation Sans,sans-serif" font-size="9" text-anchor="middle" fill="#000" stroke="#000" stroke-width=".3">20</text><rect x="376" y="138" width="1" height="2" fill="#000"/><rect x="385" y="138" width="1" height="2" fill="#000"/><rect x="395" y="138" width="1" height="2" fill="#000"/><rect x="404" y="137" width="1" height="3" fill="#000"/><rect x="414" y="138" width="1" height="2" fill="#000"/><rect x="423" y="138" width="1" height="2" fill="#000"/><rect x="433" y="138" width="1" height="2" fill="#000"/><rect x="451" y="138" width="1" height="2" fill="#000"/><rect x="461" y="138" width="1" height="2" fill="#000"/><rect x="470" y="138" width="1" height="2" fill="#000"/><rect x="480" y="137" width="1" height="3" fill="#000"/><rect x="489" y="138" width="1" height="2" fill="#000"/><rect x="499" y="138" width="1" height="2" fill="#000"/><rect x="508" y="138" width="1" height="2" fill="#000"/><text x="518" y="142" font-family="Liberation Sans,sans-serif" font-size="9" text-anchor="middle" fill="#000" stroke="#000" stroke-width=".3">20</text><rect x="527" y="138" width="1" height="2" fill="#000"/><rect x="536" y="138" width="1" height="2" fill="#000"/><rect x="546" y="138" width="1" height="2" fill="#000"/><rect x="555" y="137" width="1" height="3" fill="#000"/><rect x="565" y="138" width="1" height="2" fill="#000"/><rect x="574" y="138" width="1" height="2" fill="#000"/><rect x="584" y="138" width="1" height="2" fill="#000"/><text x="593" y="142" font-family="Liberation Sans,sans-serif" font-size="9" text-anchor="middle" fill="#000" stroke="#000" stroke-width=".3">40</text><rect x="603" y="138" width="1" height="2" fill="#000"/><rect x="612" y="138" width="1" height="2" fill="#000"/><rect x="622" y="138" width="1" height="2" fill="#000"/><rect x="631" y="137" width="1" height="3" fill="#000"/><rect x="640" y="138" width="1" height="2" fill="#000"/><rect x="650" y="138" width="1" height="2" fill="#000"/><rect x="659" y="138" width="1" height="2" fill="#000"/><text x="669" y="142" font-family="Liberation Sans,sans-serif" font-size="9" text-anchor="middle" fill="#000" stroke="#000" stroke-width=".3">60</text><rect x="678" y="138" width="1" height="2" fill="#000"/><rect x="688" y="138" width="1" height="2" fill="#000"/><rect x="697" y="138" width="1" height="2" fill="#000"/><rect x="707" y="137" width="1" height="3" fill="#000"/><rect x="716" y="138" width="1" height="2" fill="#000"/><rect x="725" y="138" width="1" height="2" fill="#000"/><rect x="735" y="138" width="1" height="2" fill="#000"/><text x="744" y="142" font-family="Liberation Sans,sans-serif" font-size="9" text-anchor="middle" fill="#000" stroke="#000" stroke-width=".3">80</text><rect x="754" y="138" width="1" height="2" fill="#000"/><rect x="763" y="138" width="1" height="2" fill="#000"/><rect x="773" y="138" width="1" height="2" fill="#000"/><rect x="782" y="137" width="1" height="3" fill="#000"/><rect x="792" y="138" width="1" height="2" fill="#000"/><rect x="801" y="138" width="1" height="2" fill="#000"/><rect x="811" y="138" width="1" height="2" fill="#000"/><text x="820" y="142" font-family="Liberation Sans,sans-serif" font-size="9" text-anchor="middle" fill="#000" stroke="#000" stroke-width=".3">100</text><rect x="829" y="138" width="1" height="2" fill="#000"/><rect x="839" y="138" width="1" height="2" fill="#000"/><rect x="848" y="138" width="1" height="2" fill="#000"/><rect x="858" y="137" width="1" height="3" fill="#000"/><rect x="867" y="138" width="1" height="2" fill="#000"/><rect x="877" y="138" width="1" height="2" fill="#000"/><rect x="886" y="138" width="1" height="2" fill="#000"/><text x="896" y="142" font-family="Liberation Sans,sans-serif" font-size="9" text-anchor="middle" fill="#000" stroke="#000" stroke-width=".3">120</text><rect x="905" y="138" width="1" height="2" fill="#000"/><rect x="914" y="138" width="1" height="2" fill="#000"/><rect x="924" y="138" width="1" height="2" fill="#000"/><rect x="933" y="137" width="1" height="3" fill="#000"/><rect x="943" y="138" width="1" height="2" fill="#000"/><rect x="952" y="138" width="1" height="2" fill="#000"/><rect x="962" y="138" width="1" height="2" fill="#000"/><text x="971" y="142" font-family="Liberation Sans,sans-serif" font-size="9" text-anchor="middle" fill="#000" stroke="#000" stroke-width=".3">140</text><rect x="981" y="138" width="1" height="2" fill="#000"/><rect x="990" y="138" width="1" height="2" fill="#000"/><rect x="999" y="138" width="1" height="2" fill="#000"/><rect x="1009" y="137" width="1" height="3" fill="#000"/><rect x="1018" y="138" width="1" height="2" fill="#000"/><rect x="1028" y="138" width="1" height="2" fill="#000"/><rect x="1037" y="138" width="1" height="2" fill="#000"/><text x="1047" y="142" font-family="Liberation Sans,sans-serif" font-size="9" text-anchor="middle" fill="#000" stroke="#000" stroke-width=".3">160</text><rect x="1056" y="138" width="1" height="2" fill="#000"/><rect x="1066" y="138" width="1" height="2" fill="#000"/><rect x="1075" y="138" width="1" height="2" fill="#000"/><rect x="1085" y="137" width="1" height="3" fill="#000"/><rect x="1094" y="138" width="1" height="2" fill="#000"/><rect x="1103" y="138" width="1" height="2" fill="#000"/><rect x="1113" y="138" width="1" height="2" fill="#000"/><text x="1122" y="142" font-family="Liberation Sans,sans-serif" font-size="9" text-anchor="middle" fill="#000" stroke="#000" stroke-width=".3">180</text><rect x="1132" y="138" width="1" height="2" fill="#000"/><rect x="1141" y="138" width="1" height="2" fill="#000"/><rect x="490" y="147" width="1" height="2" fill="#000"/><rect x="538" y="147" width="1" height="2" fill="#000"/><rect x="586" y="147" width="1" height="2" fill="#000"/><rect x="634" y="147" width="1" height="2" fill="#000"/><rect x="682" y="147" width="1" height="2" fill="#000"/><rect x="730" y="147" width="1" height="2" fill="#000"/><rect x="778" y="147" width="1" height="2" fill="#000"/><rect x="826" y="147" width="1" height="2" fill="#000"/><rect x="874" y="147" width="1" height="2" fill="#000"/><rect x="922" y="147" width="1" height="2" fill="#000"/><rect x="970" y="147" width="1" height="2" fill="#000"/><rect x="1018" y="147" width="1" height="2" fill="#000"/><rect x="1066" y="147" width="1" height="2" fill="#000"/><path d="M438.5 129.5h8v2.5l-4 4-4-4z" fill="#f4f4f4" stroke="#8c8c8c"/><path d="M438.5 147.500v-3.500l4-4 4 4v3.500zM438.5 147.500h8v6h-8z" fill="#f4f4f4" stroke="#8c8c8c"/><path d="M1081.5 147.500v-3.500l4-4 4 4v3.500z" fill="#f4f4f4" stroke="#8c8c8c"/></svg>
<div class="a" style="left:312px;top:184px;width:15px;height:596px;background:#fff"></div>
<div class="a" style="left:312px;top:184px;width:15px;height:57px;background:#aca899;border-bottom:1px solid #ece9d8"></div>
<svg style="left:310px;top:180px" width="18" height="600" viewBox="310 180 18 600"><rect x="318" y="194" width="2" height="1" fill="#000"/><rect x="317" y="203" width="4" height="1" fill="#000"/><rect x="318" y="213" width="2" height="1" fill="#000"/><rect x="318" y="222" width="2" height="1" fill="#000"/><rect x="318" y="232" width="2" height="1" fill="#000"/><rect x="318" y="250" width="2" height="1" fill="#000"/><rect x="318" y="260" width="2" height="1" fill="#000"/><rect x="318" y="269" width="2" height="1" fill="#000"/><rect x="317" y="279" width="4" height="1" fill="#000"/><rect x="318" y="288" width="2" height="1" fill="#000"/><rect x="318" y="298" width="2" height="1" fill="#000"/><rect x="318" y="307" width="2" height="1" fill="#000"/><text transform="translate(322 317) rotate(-90)" font-family="Liberation Sans,sans-serif" font-size="9" text-anchor="middle" fill="#000" stroke="#000" stroke-width=".3">20</text><rect x="318" y="326" width="2" height="1" fill="#000"/><rect x="318" y="335" width="2" height="1" fill="#000"/><rect x="318" y="345" width="2" height="1" fill="#000"/><rect x="317" y="354" width="4" height="1" fill="#000"/><rect x="318" y="364" width="2" height="1" fill="#000"/><rect x="318" y="373" width="2" height="1" fill="#000"/><rect x="318" y="383" width="2" height="1" fill="#000"/><text transform="translate(322 392) rotate(-90)" font-family="Liberation Sans,sans-serif" font-size="9" text-anchor="middle" fill="#000" stroke="#000" stroke-width=".3">40</text><rect x="318" y="402" width="2" height="1" fill="#000"/><rect x="318" y="411" width="2" height="1" fill="#000"/><rect x="318" y="421" width="2" height="1" fill="#000"/><rect x="317" y="430" width="4" height="1" fill="#000"/><rect x="318" y="439" width="2" height="1" fill="#000"/><rect x="318" y="449" width="2" height="1" fill="#000"/><rect x="318" y="458" width="2" height="1" fill="#000"/><text transform="translate(322 468) rotate(-90)" font-family="Liberation Sans,sans-serif" font-size="9" text-anchor="middle" fill="#000" stroke="#000" stroke-width=".3">60</text><rect x="318" y="477" width="2" height="1" fill="#000"/><rect x="318" y="487" width="2" height="1" fill="#000"/><rect x="318" y="496" width="2" height="1" fill="#000"/><rect x="317" y="506" width="4" height="1" fill="#000"/><rect x="318" y="515" width="2" height="1" fill="#000"/><rect x="318" y="524" width="2" height="1" fill="#000"/><rect x="318" y="534" width="2" height="1" fill="#000"/><text transform="translate(322 543) rotate(-90)" font-family="Liberation Sans,sans-serif" font-size="9" text-anchor="middle" fill="#000" stroke="#000" stroke-width=".3">80</text><rect x="318" y="553" width="2" height="1" fill="#000"/><rect x="318" y="562" width="2" height="1" fill="#000"/><rect x="318" y="572" width="2" height="1" fill="#000"/><rect x="317" y="581" width="4" height="1" fill="#000"/><rect x="318" y="591" width="2" height="1" fill="#000"/><rect x="318" y="600" width="2" height="1" fill="#000"/><rect x="318" y="610" width="2" height="1" fill="#000"/><text transform="translate(322 619) rotate(-90)" font-family="Liberation Sans,sans-serif" font-size="9" text-anchor="middle" fill="#000" stroke="#000" stroke-width=".3">100</text><rect x="318" y="628" width="2" height="1" fill="#000"/><rect x="318" y="638" width="2" height="1" fill="#000"/><rect x="318" y="647" width="2" height="1" fill="#000"/><rect x="317" y="657" width="4" height="1" fill="#000"/><rect x="318" y="666" width="2" height="1" fill="#000"/><rect x="318" y="676" width="2" height="1" fill="#000"/><rect x="318" y="685" width="2" height="1" fill="#000"/><text transform="translate(322 695) rotate(-90)" font-family="Liberation Sans,sans-serif" font-size="9" text-anchor="middle" fill="#000" stroke="#000" stroke-width=".3">120</text><rect x="318" y="704" width="2" height="1" fill="#000"/><rect x="318" y="713" width="2" height="1" fill="#000"/><rect x="318" y="723" width="2" height="1" fill="#000"/><rect x="317" y="732" width="4" height="1" fill="#000"/><rect x="318" y="742" width="2" height="1" fill="#000"/><rect x="318" y="751" width="2" height="1" fill="#000"/><rect x="318" y="761" width="2" height="1" fill="#000"/><text transform="translate(322 770) rotate(-90)" font-family="Liberation Sans,sans-serif" font-size="9" text-anchor="middle" fill="#000" stroke="#000" stroke-width=".3">140</text></svg>
<div class="a doc" style="left:328px;top:154px;width:834px;height:610px;background:linear-gradient(#a0bde8,#5b86c4);overflow:hidden">
<div class="a" style="left:20px;top:30px;width:794px;height:1200px;background:#fff;border:1px solid #1a1a1a"></div>
<div class="a" style="left:114px;top:72px;width:1px;height:600px;background:repeating-linear-gradient(#b8b8b8 0,#b8b8b8 4px,transparent 4px,transparent 7px)"></div>
<div class="a" style="left:757px;top:72px;width:1px;height:600px;background:repeating-linear-gradient(#b8b8b8 0,#b8b8b8 4px,transparent 4px,transparent 7px)"></div>
<div class="a" style="left:99px;top:87px;width:673px;height:1px;background:repeating-linear-gradient(90deg,#b8b8b8 0,#b8b8b8 4px,transparent 4px,transparent 7px)"></div>
<div class="t" style="left:115px;top:89.71px;font-size:13.333px;">%PostLogo%</div>
<div class="t" style="left:498px;top:150.71px;font-size:13.333px;font-weight:700;">УТВЕРЖДАЮ</div>
<div class="t" style="left:498px;top:166.71px;font-size:13.333px;">%PostCompanyHead%</div>
<div class="t" style="left:498px;top:182.71px;font-size:13.333px;">%PostCompany%</div>
<div class="t" style="left:498px;top:198.71px;font-size:13.333px;">%PostCompanyHeadWorker%</div>
<div class="t" style="left:498px;top:214.71px;font-size:13.333px;">%CurrentDate%</div>
<div class="t" style="left:293px;top:395.20px;font-size:18.667px;font-weight:700;letter-spacing:0.09px;">ДОЛЖНОСТНАЯ ИНСТРУКЦИЯ</div>
<div class="t" style="left:383px;top:416.46px;font-size:16px;font-weight:700;">%PostName%</div>
<div class="t" style="left:392px;top:451.71px;font-size:13.333px;">Редакция ___</div>
<div class="t" style="left:477px;top:496.71px;font-size:13.333px;">Дата введения: "___" _______________ 2015</div>
<div class="a" style="left:120px;top:600px;width:631px;height:100px;border:1px solid #000"></div>
<div class="t" style="left:138.5px;top:606.31px;font-size:13.333px;">Должность</div>
<div class="t" style="left:349.5px;top:606.31px;font-size:13.333px;">Подпись</div>
<div class="t" style="left:573.5px;top:606.31px;font-size:13.333px;">И.О. Фамилия</div>
</div>
<div class="a" style="left:1161px;top:154px;width:1px;height:610px;background:#5b8ad0"></div>
<div class="a" style="left:1162px;top:154px;width:1px;height:610px;background:#fff"></div>
<div class="a" style="left:1163px;top:154px;width:17px;height:610px;background:#f0f0f0"></div>
<div class="a" style="left:1163px;top:171px;width:15px;height:137px;background:#cdcdcd"></div>
<svg style="left:1166.5px;top:160px" width="8" height="5.400" viewBox="0 0 9 6"><path d="M0.7 5.3L4.5 1.5 8.3 5.3" stroke="#505050" stroke-width="2.3" fill="none"/></svg>
<svg style="left:1166.5px;top:705px" width="8" height="5.400" viewBox="0 0 9 6"><path d="M0.7 0.7L4.5 4.5 8.3 0.7" stroke="#505050" stroke-width="2.3" fill="none"/></svg>
<div class="a" style="left:1162px;top:716px;width:17px;height:47px;background:#fff;border:1px solid #2f62c8"></div>
<svg style="left:1168px;top:722px" width="5" height="6" viewBox="0 0 5 6"><path d="M2.5 0L4 2H1zM2.5 1.500L5 4.800H0zM0 5h5v1H0z" fill="#000"/></svg>
<svg style="left:1167px;top:736px" width="8" height="8" viewBox="0 0 8 8"><circle cx="4" cy="4" r="3.2" fill="#b4b4b4" stroke="#222" stroke-width="1"/></svg>
<svg style="left:1168px;top:752px" width="5" height="6" viewBox="0 0 5 6"><path d="M2.5 6L4 4H1zM2.5 4.500L5 1.200H0zM0 0h5v1H0z" fill="#000"/></svg>
<div class="a" style="left:328px;top:763px;width:47px;height:17px;background:#fff;border:1px solid #2f62c8"></div>
<div class="a" style="left:359px;top:764px;width:15px;height:15px;background:#c1d2ee"></div>
<svg style="left:333px;top:768px" width="8" height="7" viewBox="0 0 8 7"><path d="M0 0h8v1H0zM0 2h8v1H0zM0 4h8v1H0zM0 6h8v1H0z" fill="#000"/></svg>
<svg style="left:348px;top:768px" width="9" height="8" viewBox="0 0 9 8"><rect x="0.6" y="0.6" width="5.800" height="4.800" fill="#fff" stroke="#000" stroke-width="1.200"/><circle cx="6" cy="5.600" r="2.100" fill="#1c3fc0"/><circle cx="6.300" cy="5.300" r="1" fill="#30b030"/><circle cx="5.300" cy="4.800" r=".6" fill="#9fe8ff"/></svg>
<svg style="left:363px;top:768px" width="8" height="7" viewBox="0 0 8 7"><rect x="0.6" y="0.6" width="6.800" height="5.800" fill="none" stroke="#000" stroke-width="1.200"/><path d="M2 2h4v1h-4zM2 4h4v1h-4z" fill="#000"/></svg>
<svg style="left:380px;top:767px" width="5.600" height="8" viewBox="0 0 6 9"><path d="M5.3 0.7L1.5 4.5 5.3 8.3" stroke="#bfbfbf" stroke-width="2.2" fill="none"/></svg>
<svg style="left:1168px;top:767px" width="5.600" height="8" viewBox="0 0 6 9"><path d="M0.7 0.7L4.5 4.5 .7 8.3" stroke="#bfbfbf" stroke-width="2.2" fill="none"/></svg>
<div class="a" style="left:3px;top:783px;width:1184px;height:36px;background:#e8e8e8;border-top:2px solid #c2c2c2"></div>
<div class="a" style="left:8px;top:789px;width:115px;height:25px;border:1px solid #8c8c8c;border-radius:3px;background:linear-gradient(#f5f5f5,#e9e9e9 44%,#c6c6c6 46%,#e3e3e3);box-shadow:inset 0 0 0 1px rgba(255,255,255,.6)"></div>
<div class="a" style="left:106px;top:790px;width:1px;height:23px;background:#9a9a9a"></div>
<svg style="left:0;top:0" width="60" height="822" viewBox="0 0 60 822"><path d="M23.200 801.500L26.600 806L36.300 795.500" stroke="#0a18f0" stroke-width="3.200" fill="none"/><path d="M22.600 800.300L26 804.800L35.800 794.200" stroke="#08c408" stroke-width="2.800" fill="none"/></svg>
<div class="t" style="left:41px;top:796px">Сохранить</div>
<svg style="left:111.500px;top:800px" width="6" height="3" viewBox="0 0 6 3"><path d="M0 0h6L3 3z" fill="#4a4a4a"/></svg>
<div class="a" style="left:1082px;top:789px;width:100px;height:25px;border:1px solid #8c8c8c;border-radius:3px;background:linear-gradient(#f5f5f5,#e9e9e9 44%,#c6c6c6 46%,#e3e3e3);box-shadow:inset 0 0 0 1px rgba(255,255,255,.6)"></div>
<svg style="left:1101px;top:795px" width="14" height="12" viewBox="0 0 14 12"><path d="M1.800 1.600L12.800 11.600M12.800 1.600L1.800 11.600" stroke="#2a0000" stroke-width="3.400" fill="none"/><path d="M1.500 1L12.500 11M12.500 1L1.500 11" stroke="#d80808" stroke-width="3" fill="none"/></svg>
<div class="t" style="left:1121px;top:796px">Закрыть</div>
<div class="a" style="left:1186px;top:29px;width:1px;height:790px;background:#fafafa"></div>
</div></body></html>
